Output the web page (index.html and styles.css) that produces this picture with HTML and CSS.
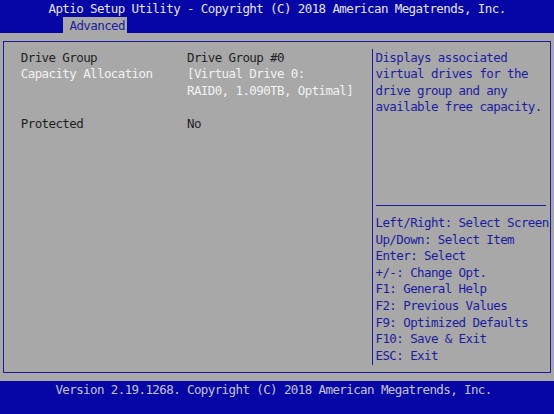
FILE: index.html
```html
<!DOCTYPE html>
<html lang="en">
<head>
<meta charset="utf-8">
<title>Aptio Setup Utility</title>
<link rel="stylesheet" href="styles.css">
</head>
<body>
<div class="screen">
  <header class="top">
    <div class="title">Aptio Setup Utility - Copyright (C) 2018 American Megatrends, Inc.</div>
    <nav class="tabs"><span class="tab">Advanced</span></nav>
  </header>

  <main class="workspace">
    <div class="frame">
      <section class="form">
        <div class="item">
          <span class="label">Drive Group</span>
          <span class="value">Drive Group #0</span>
        </div>
        <div class="item editable">
          <span class="label">Capacity Allocation</span>
          <span class="value">[Virtual Drive 0:<br>RAID0, 1.090TB, Optimal]</span>
        </div>
        <div class="spacer"></div>
        <div class="item">
          <span class="label">Protected</span>
          <span class="value">No</span>
        </div>
      </section>

      <aside class="side">
        <p class="help">Displays associated<br>virtual drives for the<br>drive group and any<br>available free capacity.</p>
        <div class="rule"></div>
        <ul class="keys">
          <li>Left/Right: Select Screen</li>
          <li>Up/Down: Select Item</li>
          <li>Enter: Select</li>
          <li>+/-: Change Opt.</li>
          <li>F1: General Help</li>
          <li>F2: Previous Values</li>
          <li>F9: Optimized Defaults</li>
          <li>F10: Save &amp; Exit</li>
          <li>ESC: Exit</li>
        </ul>
      </aside>
    </div>
  </main>

  <footer class="bottom">
    <div class="version">Version 2.19.1268. Copyright (C) 2018 American Megatrends, Inc.</div>
  </footer>
</div>
</body>
</html>
```

FILE: styles.css
```css
:root {
  --cw: 6.925px;          /* one character cell wide */
  --rh: 16.56px;          /* one text row tall */
  --blue: #0606a6;
  --grey: #a8a8a8;
  --line: #1a1aa2;
  --ink: #1e1e1e;
  --hi: #f2f2f2;
  --help: #1c1ca0;
}

* { box-sizing: border-box; }

html, body {
  margin: 0;
  padding: 0;
  background: var(--blue);
}

.screen {
  width: 554px;
  height: 414px;
  display: flex;
  flex-direction: column;
  font-family: "DejaVu Sans Mono", "Liberation Mono", monospace;
  font-size: 12.5px;
  letter-spacing: -0.6px;
  line-height: var(--rh);
  white-space: nowrap;
  overflow: hidden;
}

/* ---------- top bar ---------- */
.top {
  background: var(--blue);
  height: calc(var(--rh) * 2);
  display: flex;
  flex-direction: column;
}

.title {
  height: var(--rh);
  padding-left: calc(var(--cw) * 7);
  padding-top: 1px;
  color: #e4e4f2;
}

.tabs {
  height: var(--rh);
  display: flex;
  padding-left: 63px;
}

.tab {
  background: var(--grey);
  color: var(--help);
  padding: 1px 2.5px 0 6.5px;
}

/* ---------- grey work area ---------- */
.workspace {
  background: var(--grey);
  height: calc(var(--rh) * 21);
  flex: none;
  display: flex;
  padding: calc(var(--rh) / 2 - 0.5px) 3px calc(var(--rh) / 2 - 0.5px) 3px;
}

.frame {
  flex: 1;
  border: 1px solid var(--line);
  display: flex;
  padding: calc(var(--rh) / 2 - 1.5px) 0;
}

.form {
  width: 368px;
  padding-left: 16.8px;
  padding-top: 1px;
  display: flex;
  flex-direction: column;
  color: var(--ink);
}

.item {
  display: flex;
}

.label {
  width: calc(var(--cw) * 24);
  flex: none;
}

.item.editable { color: var(--hi); }

.spacer { height: var(--rh); }

.side {
  flex: 1;
  border-left: 1px solid var(--line);
  padding-left: 2.5px;
  padding-top: 1px;
  display: flex;
  flex-direction: column;
  color: var(--help);
}

.help {
  margin: 0;
  height: calc(var(--rh) * 9);
}

.rule {
  height: var(--rh);
  display: flex;
  align-items: center;
  margin: -1px 4px 1px 0.5px;
}

.rule::before {
  content: "";
  flex: 1;
  height: 1px;
  background: var(--line);
}

.keys {
  list-style: none;
  margin: 0;
  padding: 0;
}

/* ---------- bottom bar ---------- */
.bottom {
  background: var(--blue);
  flex: 1;
}

.version {
  padding-left: calc(var(--cw) * 8);
  padding-top: 1px;
  color: #c4c4dc;
}
```
